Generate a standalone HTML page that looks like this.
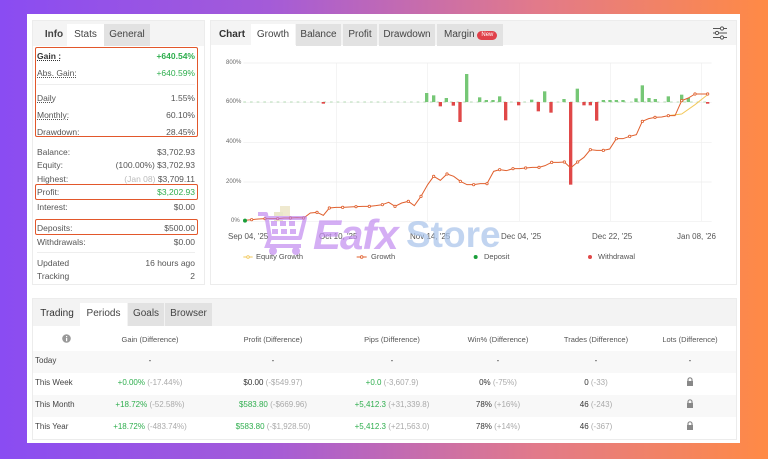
<!DOCTYPE html>
<html><head><meta charset="utf-8"><style>
*{margin:0;padding:0;box-sizing:border-box}
body{width:768px;height:459px;overflow:hidden;position:relative;font-family:"Liberation Sans",sans-serif;color:#333;
background:linear-gradient(90deg,#8a4cf2 0%,#a45bd8 35%,#e27a8a 70%,#ff8a45 100%)}
.frame{position:absolute;left:27px;top:14px;width:713px;height:429px;background:#fff}
.abs{position:absolute}
.panel{position:absolute;background:#fff;border:1px solid #ececec}
.tabbar{position:absolute;left:0;right:0;top:0;height:25px;background:#f4f4f4}
.tab{position:absolute;top:3px;height:22px;line-height:22px;font-size:10px;text-align:center;color:#444}
.tab.w{background:#fff}.tab.g{background:#e2e2e2}
.row{position:absolute;left:37px;width:158px;font-size:8.5px;color:#555;display:flex;justify-content:space-between}
.row u{text-decoration:underline dotted}
.gr{color:#2fae4e}
.box{position:absolute;border:1.5px solid #e2572b;border-radius:2px}
.th{position:absolute;font-size:7.5px;color:#555;transform:translateX(-50%);white-space:nowrap}
.td{position:absolute;font-size:8px;color:#333;transform:translateX(-50%);white-space:nowrap}
.td i{font-style:normal;color:#aaa}
.lab{position:absolute;left:35px;font-size:8px;color:#444}
.ax{position:absolute;font-size:6px;color:#666}
.dx{position:absolute;font-size:8px;color:#555}
</style></head><body>
<div class="frame"></div>

<!-- left panel -->
<div class="panel" style="left:32px;top:20px;width:173px;height:265px">
 <div class="tabbar"></div>
 <div class="tab" style="left:6px;width:30px;font-weight:bold">Info</div>
 <div class="tab w" style="left:34px;width:37px">Stats</div>
 <div class="tab g" style="left:71px;width:46px">General</div>
</div>
<div class="box" style="left:35px;top:47px;width:163px;height:90px"></div>
<div class="box" style="left:35px;top:184px;width:163px;height:16px"></div>
<div class="box" style="left:35px;top:219px;width:163px;height:16px"></div>
<div class="row" style="top:51px"><u style="font-weight:bold;color:#333">Gain :</u><b class="gr">+640.54%</b></div>
<div class="row" style="top:68px"><u>Abs. Gain:</u><span class="gr">+640.59%</span></div>
<div class="abs" style="left:37px;top:84px;width:158px;border-top:1px solid #eee"></div>
<div class="row" style="top:93px"><u>Daily</u><span>1.55%</span></div>
<div class="row" style="top:110px"><u>Monthly:</u><span>60.10%</span></div>
<div class="row" style="top:127px"><span>Drawdown:</span><span>28.45%</span></div>
<div class="row" style="top:147px"><span>Balance:</span><span>$3,702.93</span></div>
<div class="row" style="top:160px"><span>Equity:</span><span>(100.00%) $3,702.93</span></div>
<div class="row" style="top:174px"><span>Highest:</span><span><i style="font-style:normal;color:#bbb">(Jan 08)</i> $3,709.11</span></div>
<div class="row" style="top:187px"><span>Profit:</span><span class="gr">$3,202.93</span></div>
<div class="row" style="top:202px"><span>Interest:</span><span>$0.00</span></div>
<div class="row" style="top:223px"><span>Deposits:</span><span>$500.00</span></div>
<div class="row" style="top:237px"><span>Withdrawals:</span><span>$0.00</span></div>
<div class="abs" style="left:37px;top:252px;width:158px;border-top:1px solid #eee"></div>
<div class="row" style="top:258px"><span>Updated</span><span>16 hours ago</span></div>
<div class="row" style="top:271px"><span>Tracking</span><span>2</span></div>

<!-- chart panel -->
<div class="panel" style="left:210px;top:20px;width:527px;height:265px">
 <div class="tabbar" style="height:24px"></div>
 <div class="tab" style="left:4px;width:34px;font-weight:bold;color:#333">Chart</div>
 <div class="tab w" style="left:40px;width:44px">Growth</div>
 <div class="tab g" style="left:85px;width:45px">Balance</div>
 <div class="tab g" style="left:132px;width:34px">Profit</div>
 <div class="tab g" style="left:168px;width:56px">Drawdown</div>
 <div class="tab g" style="left:226px;width:66px;text-align:left;padding-left:7px">Margin <span style="background:#e0404a;color:#fff;font-size:6px;border-radius:5px;padding:0 4px;line-height:9px;display:inline-block;vertical-align:1px">New</span></div>
</div>
<svg class="abs" style="left:712px;top:26px" width="16" height="14" viewBox="0 0 16 14" fill="none" stroke="#555" stroke-width="1"><path d="M1 2.5h14M1 7h14M1 11.5h14"/><circle cx="10" cy="2.5" r="1.6" fill="#fff"/><circle cx="5" cy="7" r="1.6" fill="#fff"/><circle cx="10" cy="11.5" r="1.6" fill="#fff"/></svg>

<div class="ax" style="left:226px;top:60px">800%</div>
<div class="ax" style="left:226px;top:99px">600%</div>
<div class="ax" style="left:226px;top:139px">400%</div>
<div class="ax" style="left:226px;top:179px">200%</div>
<div class="ax" style="left:231px;top:218px">0%</div>
<div class="dx" style="left:228px;top:232px">Sep 04, '25</div>
<div class="dx" style="left:319px;top:232px">Oct 10, '25</div>
<div class="dx" style="left:410px;top:232px">Nov 14, '25</div>
<div class="dx" style="left:501px;top:232px">Dec 04, '25</div>
<div class="dx" style="left:592px;top:232px">Dec 22, '25</div>
<div class="dx" style="left:677px;top:232px">Jan 08, '26</div>

<svg class="abs" style="left:205px;top:18px" width="540" height="270" viewBox="0 0 1620 810">
<g stroke="#eee" stroke-width="2"><path d="M115 135H1520M115 253H1520M115 373H1520M115 492H1520M115 610H1520"/><path d="M394 135V610M668 135V610M943 135V610M1216 135V610M1490 135V610"/></g>
<path d="M115 252H1510" stroke="#9ccf9c" stroke-width="2" stroke-dasharray="8 12"/>
<g fill="#76c776">
<rect x="660" y="225" width="10" height="27"/><rect x="681" y="232" width="10" height="20"/><rect x="719" y="240" width="10" height="12"/><rect x="780" y="168" width="10" height="84"/><rect x="819" y="238" width="10" height="14"/><rect x="839" y="246" width="10" height="6"/><rect x="859" y="246" width="10" height="6"/><rect x="879" y="235" width="10" height="17"/><rect x="975" y="245" width="10" height="7"/><rect x="1014" y="220" width="10" height="32"/><rect x="1072" y="243" width="10" height="9"/><rect x="1112" y="212" width="10" height="40"/><rect x="1190" y="246" width="10" height="6"/><rect x="1210" y="246" width="10" height="6"/><rect x="1229" y="246" width="10" height="6"/><rect x="1249" y="246" width="10" height="6"/><rect x="1288" y="241" width="10" height="11"/><rect x="1307" y="202" width="10" height="50"/><rect x="1327" y="240" width="10" height="12"/><rect x="1346" y="243" width="10" height="9"/><rect x="1385" y="235" width="10" height="17"/><rect x="1425" y="230" width="10" height="22"/><rect x="1445" y="240" width="10" height="12"/>
</g>
<g fill="#e04848">
<rect x="350" y="252" width="10" height="5"/><rect x="701" y="252" width="10" height="13"/><rect x="740" y="252" width="10" height="11"/><rect x="760" y="252" width="10" height="60"/><rect x="897" y="252" width="10" height="55"/><rect x="936" y="252" width="10" height="10"/><rect x="995" y="252" width="10" height="28"/><rect x="1033" y="252" width="10" height="32"/><rect x="1092" y="252" width="10" height="248"/><rect x="1132" y="252" width="10" height="10"/><rect x="1151" y="252" width="10" height="10"/><rect x="1170" y="252" width="10" height="56"/><rect x="1503" y="252" width="10" height="5"/>
</g>
<path d="M1390 293L1430 288L1470 260L1508 230" stroke="#f2c85b" stroke-width="3" fill="none"/>
<polyline fill="none" stroke="#e0602e" stroke-width="3" points="120,607 140,605 160,603 180,602 200,602 218,602 237,600 256,600 276,599 296,600 316,585 336,583 355,592 373,570 393,568 413,568 433,567 453,566 473,565 493,565 512,563 532,560 551,553 570,565 590,555 610,550 628,563 648,535 668,500 686,475 706,487 726,468 746,475 766,490 786,500 806,500 826,497 846,497 866,460 884,455 904,458 924,452 944,452 962,450 982,448 1002,448 1020,443 1040,433 1060,433 1078,432 1097,450 1118,432 1137,418 1156,395 1175,397 1195,397 1214,393 1234,362 1254,362 1274,355 1294,350 1312,310 1331,302 1350,298 1370,297 1390,293 1410,293 1430,248 1450,240 1470,228 1490,228 1508,228"/>
<g fill="#fff" stroke="#e0602e" stroke-width="2.5">
<circle cx="140" cy="605" r="3.5"/><circle cx="180" cy="602" r="3.5"/><circle cx="218" cy="602" r="3.5"/><circle cx="256" cy="600" r="3.5"/><circle cx="296" cy="600" r="3.5"/><circle cx="336" cy="583" r="3.5"/><circle cx="373" cy="570" r="3.5"/><circle cx="413" cy="568" r="3.5"/><circle cx="453" cy="566" r="3.5"/><circle cx="493" cy="565" r="3.5"/><circle cx="532" cy="560" r="3.5"/><circle cx="570" cy="565" r="3.5"/><circle cx="610" cy="550" r="3.5"/><circle cx="648" cy="535" r="3.5"/><circle cx="686" cy="475" r="3.5"/><circle cx="726" cy="468" r="3.5"/><circle cx="766" cy="490" r="3.5"/><circle cx="806" cy="500" r="3.5"/><circle cx="846" cy="497" r="3.5"/><circle cx="884" cy="455" r="3.5"/><circle cx="924" cy="452" r="3.5"/><circle cx="962" cy="450" r="3.5"/><circle cx="1002" cy="448" r="3.5"/><circle cx="1040" cy="433" r="3.5"/><circle cx="1078" cy="432" r="3.5"/><circle cx="1118" cy="432" r="3.5"/><circle cx="1156" cy="395" r="3.5"/><circle cx="1195" cy="397" r="3.5"/><circle cx="1234" cy="362" r="3.5"/><circle cx="1274" cy="355" r="3.5"/><circle cx="1312" cy="310" r="3.5"/><circle cx="1350" cy="298" r="3.5"/><circle cx="1390" cy="293" r="3.5"/><circle cx="1430" cy="248" r="3.5"/><circle cx="1470" cy="228" r="3.5"/><circle cx="1508" cy="228" r="3.5"/>
</g>
<circle cx="120" cy="608" r="6" fill="#1a9e3a"/>
<path d="M115 717h28" stroke="#f2c85b" stroke-width="3"/><circle cx="129" cy="717" r="4" fill="#fff" stroke="#f2c85b" stroke-width="2.5"/>
<path d="M455 717h30" stroke="#e0602e" stroke-width="3"/><circle cx="470" cy="717" r="4" fill="#fff" stroke="#e0602e" stroke-width="2.5"/>
<circle cx="812" cy="717" r="6" fill="#1a9e3a"/><circle cx="1155" cy="717" r="6" fill="#e04848"/>
</svg>
<div class="dx" style="left:256px;top:252px;font-size:7.5px">Equity Growth</div>
<div class="dx" style="left:371px;top:252px;font-size:7.5px">Growth</div>
<div class="dx" style="left:484px;top:252px;font-size:7.5px">Deposit</div>
<div class="dx" style="left:598px;top:252px;font-size:7.5px">Withdrawal</div>

<!-- watermark -->
<svg class="abs" style="left:256px;top:206px;opacity:.6" width="52" height="50" viewBox="0 0 52 50">
<rect x="24" y="0" width="10" height="10" fill="#e6dcb0"/><rect x="18" y="6" width="9" height="9" fill="#dcd6a8"/>
<path d="M2 8h8l4 24h30l5-20H12" fill="none" stroke="#b878ee" stroke-width="4" stroke-linejoin="round"/>
<g fill="#b878ee"><rect x="15" y="15" width="6" height="5"/><rect x="24" y="15" width="6" height="5"/><rect x="33" y="15" width="6" height="5"/><rect x="16" y="23" width="6" height="5"/><rect x="25" y="23" width="6" height="5"/><rect x="34" y="23" width="6" height="5"/></g>
<path d="M14 32l-3 8h34" fill="none" stroke="#b878ee" stroke-width="4"/>
<circle cx="17" cy="45" r="4" fill="#b878ee"/><circle cx="40" cy="45" r="4" fill="#b878ee"/>
</svg>
<div class="abs" style="left:313px;top:211px;font-size:42px;font-weight:bold;font-style:italic;color:#c28cf0;opacity:.7;letter-spacing:-1px">Eafx</div>
<div class="abs" style="left:406px;top:214px;font-size:37px;font-weight:bold;color:#a8c3ea;opacity:.7">Store</div>

<!-- bottom panel -->
<div class="panel" style="left:32px;top:298px;width:705px;height:142px">
 <div class="tabbar" style="height:27px;background:#f3f3f3"></div>
 <div class="tab" style="left:4px;top:4px;width:40px;color:#333">Trading</div>
 <div class="tab w" style="left:47px;top:4px;width:47px;height:23px">Periods</div>
 <div class="tab g" style="left:95px;top:4px;width:36px;height:23px">Goals</div>
 <div class="tab g" style="left:132px;top:4px;width:47px;height:23px">Browser</div>
 <div class="abs" style="left:0;right:0;top:52px;height:22px;background:#f8f8f8"></div>
 <div class="abs" style="left:0;right:0;top:96px;height:22px;background:#f8f8f8"></div>
</div>
<svg class="abs" style="left:62px;top:334px" width="9" height="9"><circle cx="4.5" cy="4.5" r="4.3" fill="#999"/><rect x="4" y="4" width="1.2" height="3.2" fill="#fff"/><rect x="4" y="2" width="1.2" height="1.2" fill="#fff"/></svg>
<div class="th" style="left:150px;top:335px">Gain (Difference)</div>
<div class="th" style="left:273px;top:335px">Profit (Difference)</div>
<div class="th" style="left:392px;top:335px">Pips (Difference)</div>
<div class="th" style="left:498px;top:335px">Win% (Difference)</div>
<div class="th" style="left:596px;top:335px">Trades (Difference)</div>
<div class="th" style="left:690px;top:335px">Lots (Difference)</div>

<div class="lab" style="top:356px">Today</div>
<div class="td" style="left:150px;top:356px">-</div><div class="td" style="left:273px;top:356px">-</div><div class="td" style="left:392px;top:356px">-</div><div class="td" style="left:498px;top:356px">-</div><div class="td" style="left:596px;top:356px">-</div><div class="td" style="left:690px;top:356px">-</div>

<div class="lab" style="top:378px">This Week</div>
<div class="td" style="left:150px;top:378px"><span class="gr">+0.00%</span> <i>(-17.44%)</i></div>
<div class="td" style="left:273px;top:378px">$0.00 <i>(-$549.97)</i></div>
<div class="td" style="left:392px;top:378px"><span class="gr">+0.0</span> <i>(-3,607.9)</i></div>
<div class="td" style="left:498px;top:378px">0% <i>(-75%)</i></div>
<div class="td" style="left:596px;top:378px">0 <i>(-33)</i></div>

<div class="lab" style="top:400px">This Month</div>
<div class="td" style="left:150px;top:400px"><span class="gr">+18.72%</span> <i>(-52.58%)</i></div>
<div class="td" style="left:273px;top:400px"><span class="gr">$583.80</span> <i>(-$669.96)</i></div>
<div class="td" style="left:392px;top:400px"><span class="gr">+5,412.3</span> <i>(+31,339.8)</i></div>
<div class="td" style="left:498px;top:400px">78% <i>(+16%)</i></div>
<div class="td" style="left:596px;top:400px">46 <i>(-243)</i></div>

<div class="lab" style="top:422px">This Year</div>
<div class="td" style="left:150px;top:422px"><span class="gr">+18.72%</span> <i>(-483.74%)</i></div>
<div class="td" style="left:273px;top:422px"><span class="gr">$583.80</span> <i>(-$1,928.50)</i></div>
<div class="td" style="left:392px;top:422px"><span class="gr">+5,412.3</span> <i>(+21,563.0)</i></div>
<div class="td" style="left:498px;top:422px">78% <i>(+14%)</i></div>
<div class="td" style="left:596px;top:422px">46 <i>(-367)</i></div>

<svg class="abs" style="left:686px;top:377px" width="8" height="9"><path d="M2 4V2.8a2 2 0 0 1 4 0V4" stroke="#888" fill="none" stroke-width="1.2"/><rect x="1" y="4" width="6" height="5" fill="#888"/></svg>
<svg class="abs" style="left:686px;top:399px" width="8" height="9"><path d="M2 4V2.8a2 2 0 0 1 4 0V4" stroke="#888" fill="none" stroke-width="1.2"/><rect x="1" y="4" width="6" height="5" fill="#888"/></svg>
<svg class="abs" style="left:686px;top:421px" width="8" height="9"><path d="M2 4V2.8a2 2 0 0 1 4 0V4" stroke="#888" fill="none" stroke-width="1.2"/><rect x="1" y="4" width="6" height="5" fill="#888"/></svg>
</body></html>
